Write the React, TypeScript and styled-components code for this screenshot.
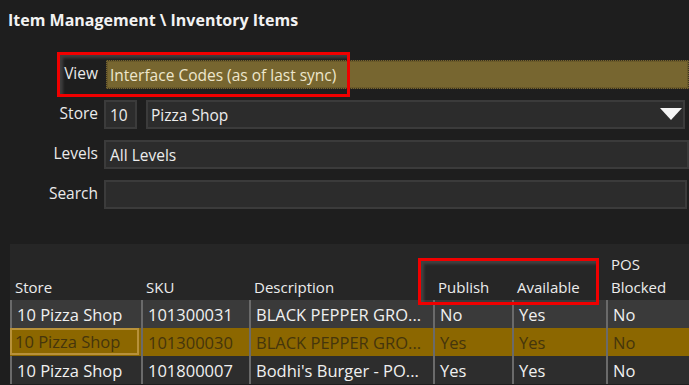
import React from "react";
import { styled, createGlobalStyle } from "styled-components";

const GlobalStyle = createGlobalStyle`
  html, body {
    margin: 0;
    padding: 0;
    background: #1e1e1e;
    overflow: hidden;
  }
  body {
    font-family: "Open Sans", "Noto Sans", "DejaVu Sans", sans-serif;
    color: #e8e8e8;
  }
`;

type Row = {
  store: string;
  sku: string;
  desc: string;
  publish: string;
  available: string;
  blocked: string;
};

const rows: Row[] = [
  { store: "10 Pizza Shop", sku: "101300031", desc: "BLACK PEPPER GRO...", publish: "No", available: "Yes", blocked: "No" },
  { store: "10 Pizza Shop", sku: "101300030", desc: "BLACK PEPPER GRO...", publish: "Yes", available: "Yes", blocked: "No" },
  { store: "10 Pizza Shop", sku: "101800007", desc: "Bodhi's Burger - PO...", publish: "Yes", available: "Yes", blocked: "No" },
];

const columns = "131px 108px 184px 79px 94px 1fr";

const App = () => {
  return (
    <Page>
      <GlobalStyle />
      <Title>Item Management \ Inventory Items</Title>

      <Form>
        <FieldRow>
          <Label>View</Label>
          <ViewInput>Interface Codes (as of last sync)</ViewInput>
          <Highlight $left={57} $top={-8} $width={293} $height={45} />
        </FieldRow>

        <FieldRow>
          <Label>Store</Label>
          <StoreFields>
            <Input $width="33px">10</Input>
            <Select>
              Pizza Shop
              <svg width="22" height="13" viewBox="0 0 22 13">
                <polygon points="0,0 22,0 11,12" fill="#f4f4f4" />
              </svg>
            </Select>
          </StoreFields>
        </FieldRow>

        <FieldRow>
          <Label>Levels</Label>
          <Input>All Levels</Input>
        </FieldRow>

        <FieldRow>
          <Label>Search</Label>
          <Input $right="2px" />
        </FieldRow>
      </Form>

      <Table>
        <HeaderRow>
          <HeadCell>Store</HeadCell>
          <HeadCell>SKU</HeadCell>
          <HeadCell>Description</HeadCell>
          <HeadCell>Publish</HeadCell>
          <HeadCell>Available</HeadCell>
          <HeadCell>
            POS
            <br />
            Blocked
          </HeadCell>
          <Highlight $left={408} $top={14} $width={181} $height={47} />
        </HeaderRow>
        {rows.map((r, i) => (
          <DataRow key={r.sku} $variant={i === 1 ? "selected" : i === 0 ? "light" : "dark"}>
            <Cell $focus={i === 1}>{r.store}</Cell>
            <Cell>{r.sku}</Cell>
            <Cell>{r.desc}</Cell>
            <Cell>{r.publish}</Cell>
            <Cell>{r.available}</Cell>
            <Cell>{r.blocked}</Cell>
          </DataRow>
        ))}
      </Table>
    </Page>
  );
};

export default App;

const Page = styled.div`
  width: 689px;
  height: 385px;
  overflow: hidden;
`;

const Title = styled.div`
  padding: 9px 0 0 8px;
  height: 25px;
  font-size: 16px;
  line-height: 22px;
  font-weight: 700;
  color: #f2f2f2;
`;

const Form = styled.div`
  display: flex;
  flex-direction: column;
  gap: 11px;
  padding-top: 26px;
`;

const FieldRow = styled.div`
  position: relative;
  display: grid;
  grid-template-columns: 98px 1fr;
  column-gap: 6px;
  align-items: center;
  height: 29px;
`;

const Label = styled.div`
  text-align: right;
  font-size: 15.5px;
  color: #eaeaea;
  margin-top: -4px;
`;

const fieldBase = `
  box-sizing: border-box;
  height: 29px;
  display: flex;
  align-items: center;
  padding: 0 4px;
  font-size: 15.5px;
  white-space: nowrap;
`;

const ViewInput = styled.div`
  ${fieldBase}
  margin-left: 2px;
  padding-left: 3px;
  background: #776630;
  border: 1px dotted #3a3220;
  box-shadow: inset 0 0 0 1px #6a5a2a;
  color: #eee6cc;
`;

const Input = styled.div<{ $width?: string; $right?: string }>`
  ${fieldBase}
  width: ${({ $width }) => $width || "auto"};
  margin-right: ${({ $right }) => $right || "0"};
  background: #2c2c2c;
  border: 2px solid #3b3b3b;
  color: #ededed;
`;

const StoreFields = styled.div`
  display: flex;
  gap: 9px;
  padding-right: 4px;
`;

const Select = styled.div`
  ${fieldBase}
  flex: 1;
  justify-content: space-between;
  padding: 0 1px 0 3px;
  background: #2c2c2c;
  border: 2px solid #3b3b3b;
  color: #ededed;
`;

// red annotation frame drawn over the screenshot
const Highlight = styled.div<{ $left: number; $top: number; $width: number; $height: number }>`
  position: absolute;
  left: ${({ $left }) => $left}px;
  top: ${({ $top }) => $top}px;
  width: ${({ $width }) => $width}px;
  height: ${({ $height }) => $height}px;
  box-sizing: border-box;
  border: 3px solid #f00000;
  box-shadow: inset 3px 3px 3px rgba(90, 90, 90, 0.55);
  pointer-events: none;
`;

const Table = styled.div`
  margin: 35px 0 0 10px;
  background: #262626;
`;

const HeaderRow = styled.div`
  position: relative;
  display: grid;
  grid-template-columns: ${columns};
  height: 56px;
  align-items: end;
`;

const HeadCell = styled.div`
  font-size: 15px;
  color: #ececec;
  padding: 0 0 1px 5px;
  line-height: 23px;
`;

const rowColors = {
  light: { bg: "#3a3a3a", fg: "#f0f0f0" },
  selected: { bg: "#8c6700", fg: "#45350c" },
  dark: { bg: "#2d2d2d", fg: "#f0f0f0" },
};

const DataRow = styled.div<{ $variant: keyof typeof rowColors }>`
  display: grid;
  grid-template-columns: ${columns};
  height: 28px;
  background: ${({ $variant }) => rowColors[$variant].bg};
  color: ${({ $variant }) => rowColors[$variant].fg};
`;

const Cell = styled.div<{ $focus?: boolean }>`
  box-sizing: border-box;
  display: flex;
  align-items: center;
  padding-left: 5px;
  font-size: 16.5px;
  white-space: nowrap;
  overflow: hidden;
  border-left: 2px solid #6a6a6a;
  ${({ $focus }) =>
    $focus &&
    `
    border: 2px solid #b8913a;
    margin: 0 2px 1px 0;
    padding-left: 3px;
  `}
`;
